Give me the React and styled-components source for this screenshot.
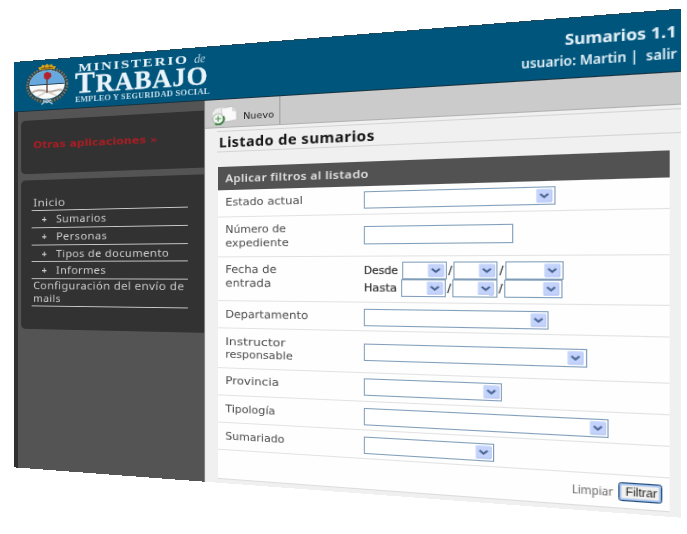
import React, { useLayoutEffect, useRef, useState } from "react";
import styled, { createGlobalStyle } from "styled-components";

const GlobalStyle = createGlobalStyle`
  html, body { margin: 0; background: #fff; overflow: hidden; }
  * { box-sizing: border-box; }
`;

/* The page is a 668x450 sheet seen in perspective. ux() turns a distance along
   the tilted sheet into a distance on the flat one; span() does it for a range. */
const ux = (x) => (x - 14) / (0.7948 + 0.0003054 * (x - 14));
const span = (a, b) => ux(b) - ux(a);

const Stage = styled.div`
  width: 687px;
  height: 534px;
  overflow: hidden;
  background: #fff;
`;

const Sheet = styled.div`
  width: 668px;
  height: 450px;
  display: flex;
  flex-direction: column;
  background: #f0f0f0;
  font-family: "Noto Sans", sans-serif;
  transform-origin: 0 0;
  transform: matrix3d(
    0.79052, -0.08268, 0, -0.00030539,
    0, 0.9007, 0, 0,
    0, 0, 1, 0,
    14, 62, 0, 1
  );
`;

const FitBox = styled.span`
  display: inline-block;
  flex: none;
  width: ${(p) => p.$w}px;
  white-space: nowrap;
  vertical-align: top;
`;
const FitText = styled.span`
  display: inline-block;
  transform-origin: 0 50%;
`;

/* One line of text set to an exact measure. */
function Fit({ from, to, children }) {
  const ref = useRef(null);
  const [scale, setScale] = useState(1);
  const w = span(from, to);
  useLayoutEffect(() => {
    setScale(w / ref.current.offsetWidth);
  }, [w]);
  return (
    <FitBox $w={w}>
      <FitText ref={ref} style={{ transform: `scaleX(${scale})` }}>{children}</FitText>
    </FitBox>
  );
}

const Header = styled.header`
  flex: none;
  height: 56.3px;
  display: flex;
  background: #00557c;
  border-top: 1px solid #1c4a60;
  border-bottom: 1px solid #17323f;
`;
const Emblem = styled.svg`
  flex: none;
  width: 54px;
  height: 46px;
  margin: 3px 0 0 ${ux(25)}px;
`;
const Brand = styled.div`
  margin: 2.5px 0 0 ${ux(75) - ux(25) - 54}px;
  color: #e9f4fa;
  font-family: "Liberation Serif", serif;
  font-weight: bold;
`;
const BrandTop = styled.div`
  display: flex;
  gap: ${span(188, 193)}px;
  padding-left: ${span(75, 78)}px;
  height: 14px;
  line-height: 17px;
  font-size: 12px;
  letter-spacing: 1.4px;
`;
const BrandDe = styled.i`
  font-weight: normal;
  letter-spacing: 0;
  color: #b8d3e0;
`;
const BrandMain = styled.div`
  height: 21px;
  line-height: 24px;
  font-size: 26.5px;
  letter-spacing: 0.8px;
  -webkit-text-stroke: 0.3px #e9f4fa;
  big { font-size: 31.5px; line-height: 20px; }
`;
const BrandSub = styled.div`
  height: 12px;
  line-height: 15px;
  font-size: 8.2px;
  letter-spacing: 0.2px;
  color: #c5dde9;
`;
const Session = styled.div`
  margin-left: auto;
  padding: 8px ${span(677, 681)}px 0 0;
  display: flex;
  flex-direction: column;
  align-items: flex-end;
  color: #e4f1f8;
  font-weight: 600;
`;
const AppName = styled.div`
  height: 21px;
  line-height: 20px;
  font-size: 14.5px;
  font-weight: 700;
`;
const User = styled.div`
  height: 18px;
  line-height: 19px;
  font-size: 13px;
`;

const Body = styled.div`
  flex: 1;
  display: flex;
  min-height: 0;
`;
const Sidebar = styled.aside`
  flex: none;
  width: ${ux(205)}px;
  padding: 10px 0 0 4.4px;
  border-left: 5px solid #303030;
  border-right: 1px solid #8a8a8a;
  background: #545454;
  display: flex;
  flex-direction: column;
  gap: 6.3px;
`;
const Box = styled.div`
  flex: none;
  height: ${(p) => p.$h}px;
  padding: ${(p) => p.$top}px 0 0 13px;
  border-radius: 5px 0 0 5px;
  background: #323232;
`;
const OtherApps = styled.div`
  padding-left: 1.4px;
  font: bold 11px/16px "DejaVu Sans", sans-serif;
  color: #a81e23;
`;
const MenuItem = styled.div`
  width: 183px;
  height: ${(p) => p.$h || 18.7}px;
  padding-left: ${(p) => (p.$sub ? 12 : 2)}px;
  border-bottom: 1px solid #c9c9c9;
  color: #cfcfcf;
  font-size: 11.5px;
  letter-spacing: 0.4px;
  line-height: ${(p) => p.$lh || 18.4}px;
  display: flex;
  flex-direction: ${(p) => (p.$sub ? "row" : "column")};
`;
const Plus = styled.span`
  flex: none;
  width: ${span(41, 56) - 0.5}px;
  font-size: 11px;
  font-weight: bold;
`;

const Main = styled.main`
  flex: 1;
  min-width: 0;
`;
const Toolbar = styled.div`
  height: 28.6px;
  display: flex;
  align-items: stretch;
  background: #cbcbcb;
  border-bottom: 1px solid #b0b0b0;
`;
const NewButton = styled.div`
  width: ${span(205, 280)}px;
  padding-left: ${span(205, 211)}px;
  display: flex;
  gap: ${span(238, 243)}px;
  border-right: 1px solid #999;
  font-size: 9.5px;
  line-height: 35px;
  font-family: "DejaVu Sans", sans-serif;
  color: #222;
`;
const NewIcon = styled.svg`
  flex: none;
  width: ${span(211, 238)}px;
  height: 21px;
  margin-top: 4.5px;
`;
const Title = styled.h1`
  height: 22px;
  margin: 3px 0 0 ${span(205, 217)}px;
  padding-left: ${span(217, 219)}px;
  border-top: 1px solid #d4d4d4;
  border-bottom: 1px solid #d4d4d4;
  font-size: 14.5px;
  letter-spacing: 0.4px;
  line-height: 20px;
  font-weight: 700;
  color: #151515;
`;
const Panel = styled.section`
  width: ${span(218, 669.8)}px;
  margin: 15px 0 0 ${span(205, 218)}px;
  background: #fefefe;
`;
const PanelHead = styled.div`
  height: 23.7px;
  padding-left: ${span(218, 225.3)}px;
  background: #525252;
  color: #e2e2e2;
  font-size: 11.5px;
  font-weight: 600;
  letter-spacing: 0.3px;
  line-height: 24px;
`;
const Row = styled.div`
  height: ${(p) => p.$h}px;
  display: flex;
  border-bottom: 1px solid #e2e2e2;
`;
const Label = styled.div`
  flex: none;
  width: ${span(218, 364)}px;
  padding: 6.6px 0 0 ${span(218, 225.3)}px;
  display: flex;
  flex-direction: column;
  color: #4a4a4a;
  font: 11px/13.6px "DejaVu Sans", sans-serif;
`;
const Field = styled.div`
  padding-top: ${(p) => p.$top || 5.5}px;
`;
const Control = styled.div`
  flex: none;
  width: ${(p) => p.$w}px;
  height: 17.2px;
  padding: 1px;
  display: flex;
  justify-content: flex-end;
  border: 1px solid #7f9db9;
  background: #fff;
`;
const Arrow = styled.svg`
  flex: none;
  width: ${(p) => p.$w}px;
  height: 100%;
`;
const DateLine = styled.div`
  height: 17px;
  display: flex;
  color: #333;
  font: 11px/18px "DejaVu Sans", sans-serif;
  -webkit-text-stroke: 0.2px #333;
`;
const DateWord = styled.div`
  width: ${(p) => p.$w}px;
`;
const Slash = styled.div`
  width: ${(p) => p.$w}px;
  text-align: center;
`;
const Actions = styled.div`
  height: 29.7px;
  padding-right: ${span(662.7, 669.8)}px;
  display: flex;
  align-items: center;
  justify-content: flex-end;
  gap: ${span(613, 618.5)}px;
  border-bottom: 1px solid #dcdcdc;
  color: #666;
  font-size: 11px;
  line-height: 15px;
`;
const Submit = styled.div`
  width: ${span(618.5, 662.7)}px;
  height: 17px;
  padding-left: 4.5px;
  border: 1px solid #1f4a78;
  border-radius: 2.5px;
  box-shadow: inset 0 0 0 1.5px #9dbcec;
  background: #f1f1f0;
  color: #222;
  font: 11px/15px "Liberation Sans", sans-serif;
`;

function Select({ from, to }) {
  return (
    <Control $w={span(from, to)}>
      <Arrow $w={span(to - 18.5, to - 1.5)} viewBox="0 0 17 16" preserveAspectRatio="none">
        <rect x="0.4" y="0.3" width="16" height="15.2" rx="1.3" fill="#c3d3fb" />
        <path d="M1 14.5H16V2" fill="none" stroke="#aebff0" strokeWidth="0.7" />
        <path d="M4.3 5.9L8.3 9.5L12.3 5.9" fill="none" stroke="#46618e" strokeWidth="2.3" />
      </Arrow>
    </Control>
  );
}

function DateRow({ word, end, cells }) {
  return (
    <DateLine>
      <DateWord $w={span(364, cells[0][0])}><Fit from={364.5} to={end}>{word}</Fit></DateWord>
      {cells.map(([a, b], i) => (
        <React.Fragment key={a}>
          {i > 0 && <Slash $w={span(cells[i - 1][1], a)}>/</Slash>}
          <Select from={a} to={b} />
        </React.Fragment>
      ))}
    </DateLine>
  );
}

const rows = [
  { h: 28, label: [["Estado actual", 303]], to: 555.7 },
  { h: 41.1, label: [["Número de", 286], ["expediente", 289]], to: 513, top: 11.8, input: true },
  { h: 45.5, label: [["Fecha de", 277], ["entrada", 271]], date: true },
  { h: 28, label: [["Departamento", 308]], to: 549 },
  { h: 40.5, label: [["Instructor", 285], ["responsable", 293]], to: 587, top: 11.6 },
  { h: 28.6, label: [["Provincia", 279]], to: 502 },
  { h: 28, label: [["Tipología", 275.5]], to: 608.7 },
  { h: 28, label: [["Sumariado", 284]], to: 494 },
];

const subItems = [["Sumarios", 106.5], ["Personas", 107.5], ["Tipos de documento", 169.5], ["Informes", 106.5]];

function CoatOfArms() {
  return (
    <Emblem viewBox="0 0 44 42" preserveAspectRatio="none">
      <ellipse cx="22" cy="22" rx="19.6" ry="16.3" fill="none" stroke="#34474a" strokeWidth="3.4" />
      <ellipse cx="22" cy="22" rx="20" ry="16.7" fill="none" stroke="#76857c" strokeWidth="2.4" strokeDasharray="1.2 1.7" />
      <path d="M14.5 6.4L13 3.8L16 3.6L17.5 1.4L20 2.6L22 0.6L24 2.6L26.7 1.4L28 3.6L31 3.8L29.5 6.4Z" fill="#d6a21c" />
      <path d="M16 5.2H28M19 3.6L20.5 5.4M25 3.6L23.5 5.4" stroke="#6d4b12" strokeWidth="1" fill="none" />
      <ellipse cx="22" cy="21.6" rx="17.7" ry="14.4" fill="#fafafa" />
      <path d="M4.3 21.3C4.8 13 12.4 7.2 22 7.2S39.2 13 39.7 21.3Z" fill="#67a9de" />
      <path d="M4.3 21.5H39.7" stroke="#1d3d52" strokeWidth="1" />
      <path d="M6.5 29C12 25.5 17 26.5 22 28.5S33 25.5 37.5 28.5" fill="none" stroke="#b9aaa0" strokeWidth="1.8" />
      <path d="M12 33.5L21.5 28.6L32 33.5" fill="none" stroke="#cfc4bc" strokeWidth="1.3" />
      <path d="M22 12V30" stroke="#5c4238" strokeWidth="1.2" />
      <path d="M18.8 10.8L22 9L26 10.4L26.4 14L23.2 16.8L19.2 15.6Z" fill="#b3222c" />
      <path d="M21.8 37L16.5 41.3M22.2 37L27.5 41.3M18 37.2L22 39.6L26 37.2" fill="none" stroke="#a9cbe0" strokeWidth="1.4" />
    </Emblem>
  );
}

function DocumentIcon() {
  return (
    <NewIcon viewBox="0 0 27 21" preserveAspectRatio="none">
      <path d="M5 3.5L14 2L16 4.4V14L2 16.5L1.5 8Z" fill="#ededed" stroke="#bdbdbd" strokeWidth="0.6" />
      <path d="M10.5 4L21.8 2.4L26 7V16.4L12.5 18Z" fill="#fafafa" stroke="#b4b4b4" strokeWidth="0.6" />
      <path d="M21.7 2.5L22.2 7H26" fill="#ddd" stroke="#bbb" strokeWidth="0.5" />
      <circle cx="7.6" cy="14.4" r="5.3" fill="#f2f5f1" stroke="#a9b8a9" strokeWidth="1" />
      <path d="M12.6 12A5.4 5.4 0 0 1 4.6 19" fill="none" stroke="#3f8347" strokeWidth="2" />
      <path d="M7.6 11.6V17.2M4.8 14.4H10.4" stroke="#6ba571" strokeWidth="1.3" />
    </NewIcon>
  );
}

export default function App() {
  return (
    <Stage>
      <GlobalStyle />
      <Sheet>
        <Header>
          <CoatOfArms />
          <Brand>
            <BrandTop>
              <Fit from={78} to={189}>MINISTERIO</Fit>
              <BrandDe><Fit from={193} to={204}>de</Fit></BrandDe>
            </BrandTop>
            <BrandMain><Fit from={75.5} to={209.5}><big>T</big>RABAJO</Fit></BrandMain>
            <BrandSub><Fit from={76} to={210.5}>EMPLEO Y SEGURIDAD SOCIAL</Fit></BrandSub>
          </Brand>
          <Session>
            <AppName><Fit from={565} to={677}>Sumarios 1.1</Fit></AppName>
            <User><Fit from={521} to={677}>usuario: Martin | &nbsp;salir</Fit></User>
          </Session>
        </Header>
        <Body>
          <Sidebar>
            <Box $h={59} $top={19.5}>
              <OtherApps><Fit from={33} to={157}>Otras aplicaciones »</Fit></OtherApps>
            </Box>
            <Box $h={164} $top={16}>
              <MenuItem><Fit from={33} to={65.5}>Inicio</Fit></MenuItem>
              {subItems.map(([name, end]) => (
                <MenuItem $sub key={name}><Plus>+</Plus><Fit from={56} to={end}>{name}</Fit></MenuItem>
              ))}
              <MenuItem $h={30} $lh={13.6}>
                <Fit from={33} to={184.5}>Configuración del envío de</Fit>
                <Fit from={33} to={61}>mails</Fit>
              </MenuItem>
            </Box>
          </Sidebar>
          <Main>
            <Toolbar>
              <NewButton><DocumentIcon /><Fit from={243} to={273.5}>Nuevo</Fit></NewButton>
            </Toolbar>
            <Title><Fit from={219} to={375.5}>Listado de sumarios</Fit></Title>
            <Panel>
              <PanelHead><Fit from={225.3} to={369}>Aplicar filtros al listado</Fit></PanelHead>
              {rows.map((r) => (
                <Row $h={r.h} key={r.label[0][0]}>
                  <Label>
                    {r.label.map(([t, end]) => <Fit key={t} from={225.3} to={end}>{t}</Fit>)}
                  </Label>
                  <Field $top={r.top}>
                    {r.date ? (
                      <>
                        <DateRow word="Desde" end={399} cells={[[402.3, 446.7], [453.7, 498], [505.3, 563.5]]} />
                        <DateRow word="Hasta" end={398} cells={[[401.5, 446], [452.5, 497], [504.3, 562.5]]} />
                      </>
                    ) : r.input ? <Control $w={span(364, r.to)} /> : <Select from={364} to={r.to} />}
                  </Field>
                </Row>
              ))}
              <Actions>
                <Fit from={572} to={613}>Limpiar</Fit>
                <Submit><Fit from={625} to={656.5}>Filtrar</Fit></Submit>
              </Actions>
            </Panel>
          </Main>
        </Body>
      </Sheet>
    </Stage>
  );
}
